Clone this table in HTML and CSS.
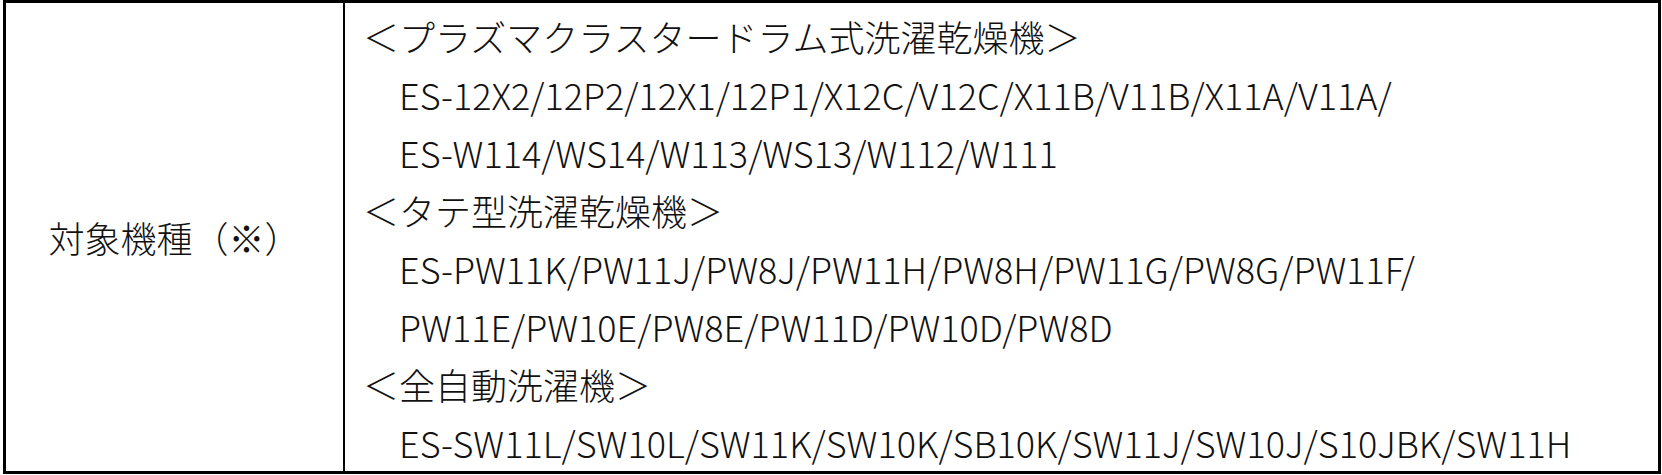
FILE: index.html
```html
<!DOCTYPE html>
<html lang="ja">
<head>
<meta charset="utf-8">
<link rel="stylesheet" href="styles.css">
</head>
<body>
<div class="table">
  <div class="cell label">対象機種（※）</div>
  <div class="cell content">
    <div class="line">＜プラズマクラスタードラム式洗濯乾燥機＞</div>
    <div class="line indent">ES-12X2/12P2/12X1/12P1/X12C/V12C/X11B/V11B/X11A/V11A/</div>
    <div class="line indent">ES-W114/WS14/W113/WS13/W112/W111</div>
    <div class="line">＜タテ型洗濯乾燥機＞</div>
    <div class="line indent">ES-PW11K/PW11J/PW8J/PW11H/PW8H/PW11G/PW8G/PW11F/</div>
    <div class="line indent">PW11E/PW10E/PW8E/PW11D/PW10D/PW8D</div>
    <div class="line">＜全自動洗濯機＞</div>
    <div class="line indent">ES-SW11L/SW10L/SW11K/SW10K/SB10K/SW11J/SW10J/S10JBK/SW11H</div>
  </div>
</div>
</body>
</html>
```
FILE: styles.css
```css
html, body {
  margin: 0;
  padding: 0;
  background: #fff;
}
body {
  font-family: "Noto Sans CJK JP", "Noto Sans", sans-serif;
  font-weight: 300;
  font-size: 36px;
  color: #111;
}
.table {
  margin: 0 1px 0 3px;
  height: 474px;
  box-sizing: border-box;
  border: 3px solid #000;
  display: flex;
}
.cell {
  box-sizing: border-box;
}
.label {
  width: 339px;
  flex: none;
  border-right: 2px solid #000;
  display: flex;
  align-items: center;
  justify-content: center;
  line-height: 58px;
}
.content {
  flex: 1;
  padding: 4px 0 0 18px;
  line-height: 58px;
}
.line {
  white-space: nowrap;
}
.indent {
  padding-left: 1em;
}
```
